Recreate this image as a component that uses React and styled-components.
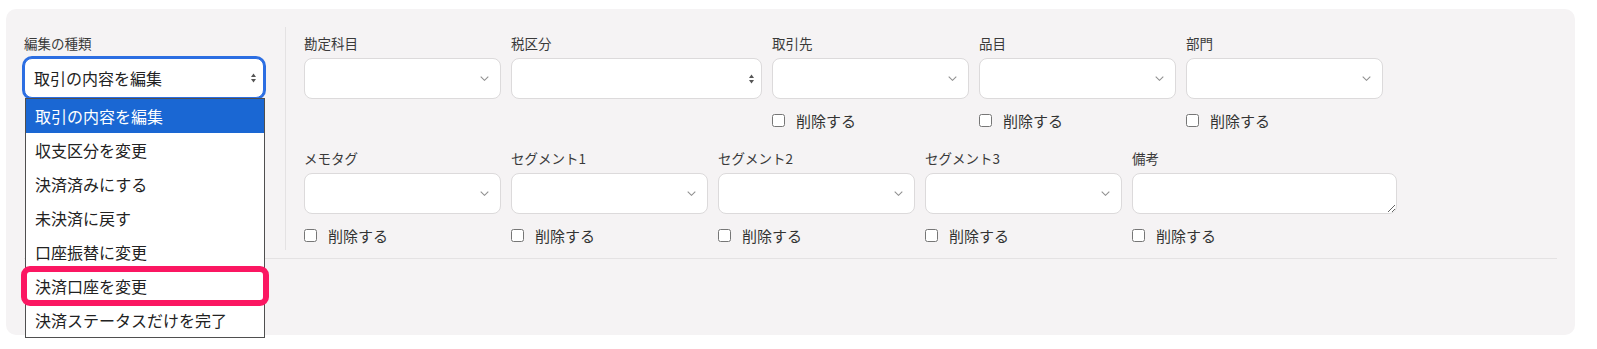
import React from "react";
import styled, { createGlobalStyle } from "styled-components";

const GlobalStyle = createGlobalStyle`
  body {
    margin: 0;
    background: #ffffff;
    font-family: "Noto Sans CJK JP", "Noto Sans", sans-serif;
    color: #333333;
  }
`;

const Page = styled.div`
  padding: 9px 22px 15px 6px;
`;

const Panel = styled.div`
  background: #f5f3f4;
  border-radius: 10px;
  padding: 18px 18px 76px 18px;
`;

const Body = styled.div`
  display: flex;
  padding-bottom: 8px;
  border-bottom: 1px solid #e4e2e3;
`;

const KindColumn = styled.div`
  position: relative;
  width: 261px;
  padding-top: 6px;
  border-right: 1px solid #e4e2e3;
`;

const Label = styled.div`
  font-size: 13.5px;
  line-height: 20px;
  color: #3a3a3a;
  white-space: nowrap;
`;

const KindSelect = styled.div`
  margin-top: 5px;
  width: 240px;
  height: 40px;
  box-sizing: border-box;
  background: #ffffff;
  border: 1px solid #2c6ee2;
  box-shadow: 0 0 0 2px #2c6ee2;
  border-radius: 8px;
  display: flex;
  align-items: center;
  justify-content: space-between;
  padding: 0 6px 0 9px;
  font-size: 16px;
  color: #222222;
`;

const UpDown = styled.svg`
  flex: none;
`;

const OptionList = styled.ul`
  position: absolute;
  top: 71px;
  left: 1px;
  z-index: 2;
  margin: 0;
  padding: 0;
  list-style: none;
  width: 240px;
  box-sizing: border-box;
  background: #ffffff;
  border: 1px solid #4f4f4f;
`;

const OptionItem = styled.li`
  position: relative;
  height: 34px;
  display: flex;
  align-items: center;
  padding-left: 9px;
  font-size: 16px;
  color: ${({ $selected }) => ($selected ? "#ffffff" : "#222222")};
  background: ${({ $selected }) => ($selected ? "#1a67d3" : "transparent")};

  ${({ $marked }) =>
    $marked &&
    `
    &::after {
      content: "";
      position: absolute;
      top: -3px;
      bottom: -3px;
      left: -5px;
      right: -5px;
      border: 6px solid #fb1762;
      border-radius: 9px;
    }
  `}
`;

const Fields = styled.div`
  padding: 6px 0 4px 18px;
  display: flex;
  flex-direction: column;
  gap: 17px;
`;

const FieldRow = styled.div`
  display: flex;
  gap: 10px;
  align-items: flex-start;
`;

const Field = styled.div`
  width: ${({ $width }) => $width}px;
  display: flex;
  flex-direction: column;
`;

const SelectBox = styled.div`
  margin-top: 5px;
  height: 41px;
  box-sizing: border-box;
  background: #ffffff;
  border: 1px solid #dcdadb;
  border-radius: 8px;
  display: flex;
  align-items: center;
  justify-content: flex-end;
  padding-right: ${({ $native }) => ($native ? 6 : 11)}px;
`;

const NoteArea = styled.textarea`
  margin: 5px 0 0 0;
  height: 41px;
  box-sizing: border-box;
  background: #ffffff;
  border: 1px solid #dcdadb;
  border-radius: 8px;
  font-family: inherit;
  resize: vertical;
  padding: 6px 8px;
  outline: none;
`;

const DeleteRow = styled.label`
  margin-top: 10px;
  display: flex;
  align-items: center;
  gap: 11px;
  height: 22px;
  font-size: 15px;
  color: #333333;
  white-space: nowrap;

  input {
    margin: 0;
    width: 13px;
    height: 13px;
  }
`;

const Chevron = () => (
  <svg width="9" height="5" viewBox="0 0 9 5">
    <path d="M0.7 0.7l3.8 3.6 3.8-3.6" fill="none" stroke="#909090" strokeWidth="1.1" />
  </svg>
);

const Arrows = () => (
  <UpDown width="7" height="10" viewBox="0 0 7 10">
    <path d="M3.5 0.5L6 4H1z" fill="#555555" />
    <path d="M3.5 9.5L6 6H1z" fill="#555555" />
  </UpDown>
);

const kinds = [
  "取引の内容を編集",
  "収支区分を変更",
  "決済済みにする",
  "未決済に戻す",
  "口座振替に変更",
  "決済口座を変更",
  "決済ステータスだけを完了",
];

const rows = [
  [
    { label: "勘定科目", width: 197 },
    { label: "税区分", width: 251, native: true },
    { label: "取引先", width: 197, removable: true },
    { label: "品目", width: 197, removable: true },
    { label: "部門", width: 197, removable: true },
  ],
  [
    { label: "メモタグ", width: 197, removable: true },
    { label: "セグメント1", width: 197, removable: true },
    { label: "セグメント2", width: 197, removable: true },
    { label: "セグメント3", width: 197, removable: true },
    { label: "備考", width: 265, removable: true, text: true },
  ],
];

const App = () => (
  <>
    <GlobalStyle />
    <Page>
      <Panel>
        <Body>
          <KindColumn>
            <Label>編集の種類</Label>
            <KindSelect>
              <span>取引の内容を編集</span>
              <Arrows />
            </KindSelect>
            <OptionList>
              {kinds.map((kind, i) => (
                <OptionItem key={kind} $selected={i === 0} $marked={i === 5}>
                  {kind}
                </OptionItem>
              ))}
            </OptionList>
          </KindColumn>

          <Fields>
            {rows.map((row, r) => (
              <FieldRow key={r}>
                {row.map((field) => (
                  <Field key={field.label} $width={field.width}>
                    <Label>{field.label}</Label>
                    {field.text ? (
                      <NoteArea />
                    ) : (
                      <SelectBox $native={field.native}>
                        {field.native ? <Arrows /> : <Chevron />}
                      </SelectBox>
                    )}
                    {field.removable && (
                      <DeleteRow>
                        <input type="checkbox" />
                        削除する
                      </DeleteRow>
                    )}
                  </Field>
                ))}
              </FieldRow>
            ))}
          </Fields>
        </Body>
      </Panel>
    </Page>
  </>
);

export default App;
